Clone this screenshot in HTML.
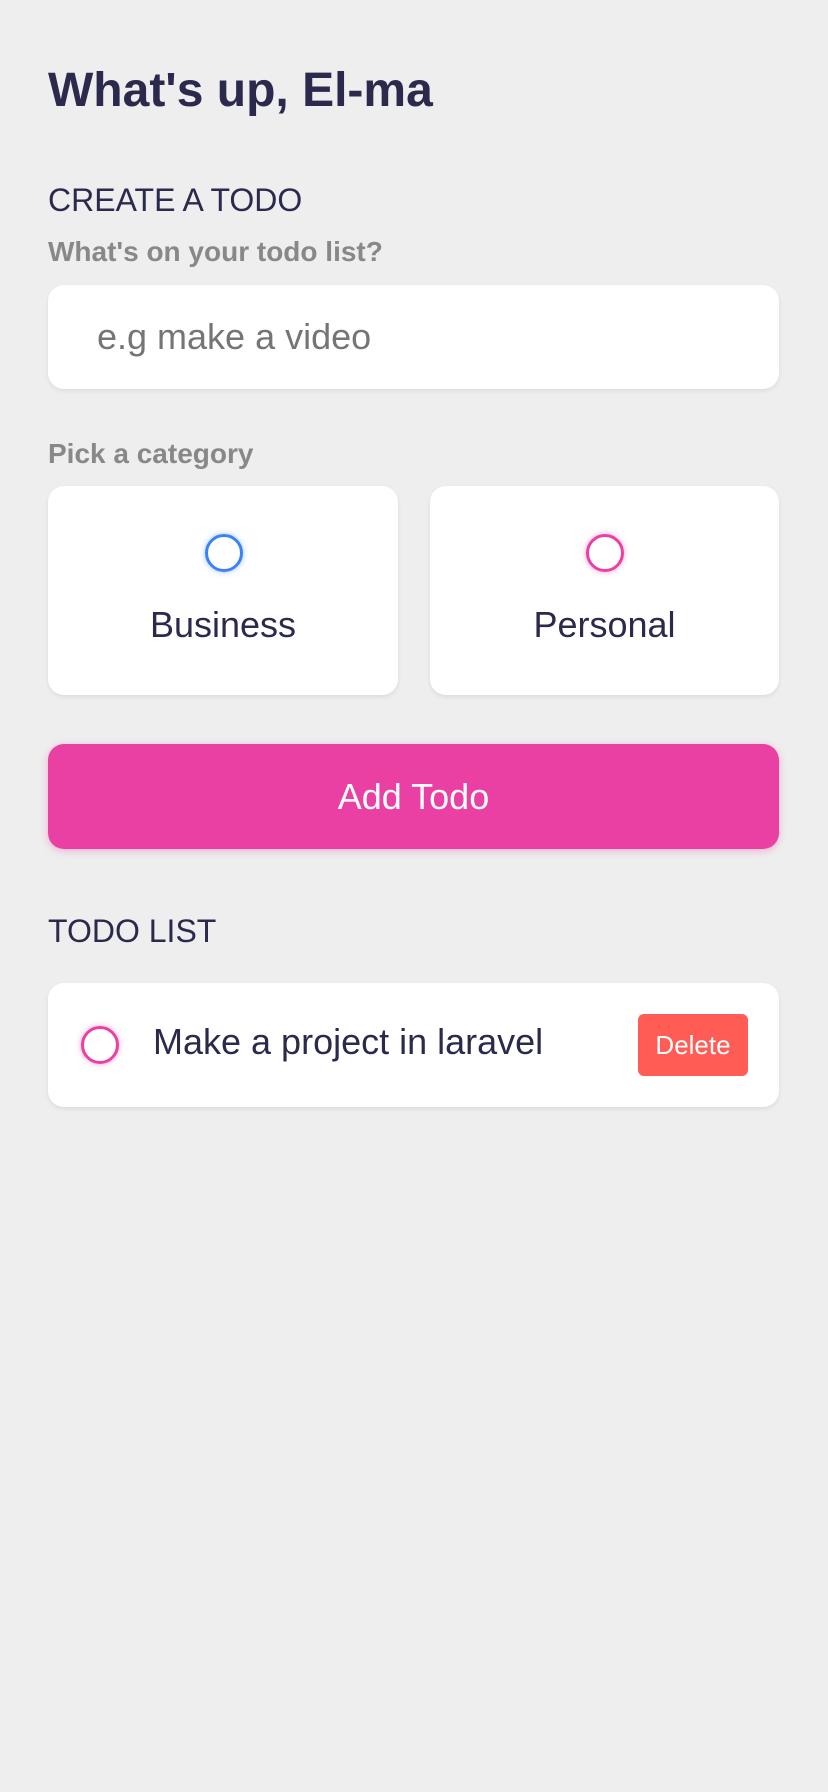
<!DOCTYPE html>
<html><head><meta charset="utf-8"><style>
*{box-sizing:border-box;margin:0;padding:0}
body{width:828px;height:1792px;background:#eeeeee;font-family:"Liberation Sans",Arial,sans-serif;color:#2b2a4d;position:relative;overflow:hidden}
.a{position:absolute;white-space:nowrap}
.card{position:absolute;background:#fff;border-radius:16px;box-shadow:0 2px 5px rgba(0,0,0,0.08)}
.circ{position:absolute;width:38px;height:38px;border-radius:50%;border:3.5px solid}
</style></head><body>
<div class="a" style="left:48px;top:63px;font-size:48px;font-weight:bold;line-height:56px">What's up, El-ma</div>
<div class="a" style="left:48px;top:182px;font-size:32px;line-height:36px">CREATE A TODO</div>
<div class="a" style="left:48px;top:236px;font-size:28px;font-weight:bold;color:#888;line-height:32px">What's on your todo list?</div>
<div class="card" style="left:48px;top:285px;width:731px;height:104px"></div>
<div class="a" style="left:97px;top:316px;font-size:36px;color:#757575;line-height:42px">e.g make a video</div>
<div class="a" style="left:48px;top:438px;font-size:28px;font-weight:bold;color:#888;line-height:32px">Pick a category</div>
<div class="card" style="left:48px;top:486px;width:350px;height:209px"></div>
<div class="card" style="left:430px;top:486px;width:349px;height:209px"></div>
<div class="circ" style="left:205px;top:534px;border-color:#3b82f6;box-shadow:0 0 6px rgba(59,130,246,0.5)"></div>
<div class="circ" style="left:586px;top:534px;border-color:#ea40a4;box-shadow:0 0 6px rgba(234,64,164,0.5)"></div>
<div class="a" style="left:48px;width:350px;text-align:center;top:604px;font-size:36px;line-height:42px">Business</div>
<div class="a" style="left:430px;width:349px;text-align:center;top:604px;font-size:36px;line-height:42px">Personal</div>
<div style="position:absolute;left:48px;top:744px;width:731px;height:105px;background:#ea40a4;border-radius:16px;box-shadow:0 2px 8px rgba(234,64,164,0.35);color:#fff;font-size:36px;text-align:center;line-height:105px">Add Todo</div>
<div class="a" style="left:48px;top:913px;font-size:32px;line-height:36px">TODO LIST</div>
<div class="card" style="left:48px;top:983px;width:731px;height:124px"></div>
<div class="circ" style="left:81px;top:1026px;border-color:#ea40a4;box-shadow:0 0 6px rgba(234,64,164,0.5)"></div>
<div class="a" style="left:153px;top:1021px;font-size:36px;line-height:42px">Make a project in laravel</div>
<div style="position:absolute;left:638px;top:1014px;width:110px;height:62px;background:#ff5c56;border-radius:6px;color:#fff;font-size:26px;line-height:62px;text-align:center">Delete</div>
</body></html>
